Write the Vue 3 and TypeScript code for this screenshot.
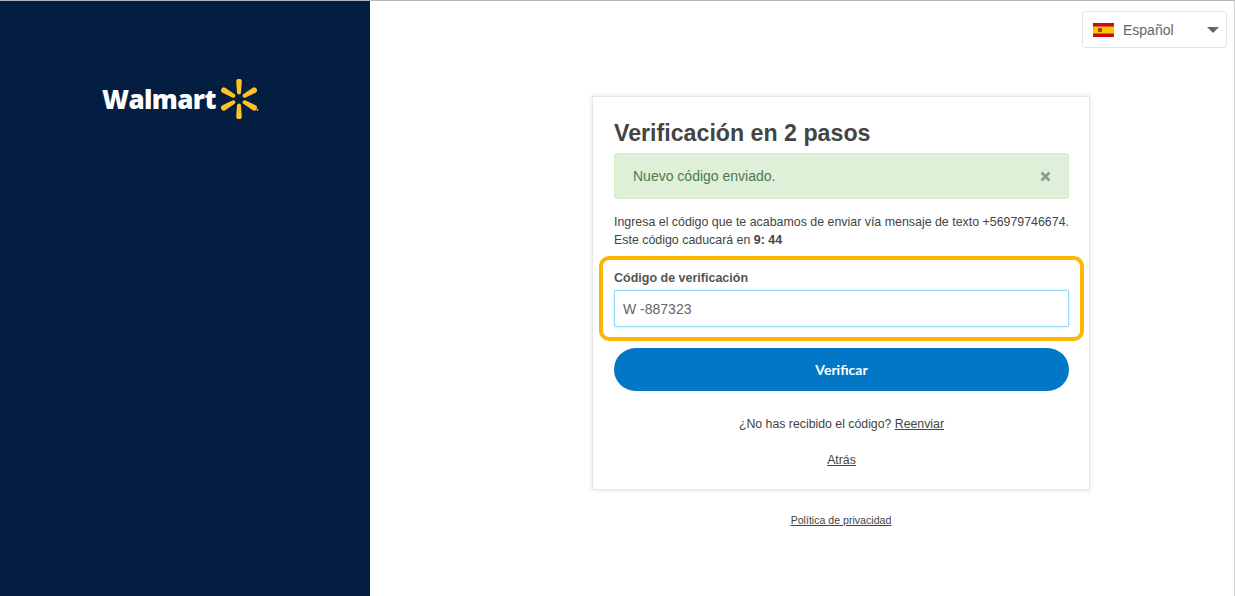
<template>
  <div class="page">
    <aside class="side">
      <div class="logo">
        <span class="logo-text">Walmart</span>
        <svg class="spark" width="39" height="40" viewBox="0 0 39 40" aria-hidden="true">
          <g fill="#ffc220">
            <path
              v-for="a in sparkAngles"
              :key="a"
              d="M16.2 3a2.8 2.8 0 0 1 5.6 0l-.8 11a2 2 0 0 1-4 0z"
              :transform="`rotate(${a} 19 20) translate(0 -0.5)`"
            />
          </g>
          <circle cx="37.5" cy="31" r="0.9" fill="#ffc220" />
        </svg>
      </div>
    </aside>

    <main class="main">
      <div class="lang-row">
        <div class="lang">
          <svg class="flag" width="21" height="14" viewBox="0 0 21 14" aria-hidden="true">
            <rect width="21" height="14" fill="#c60b1e" />
            <rect y="3.5" width="21" height="7" fill="#ffc400" />
            <rect x="5" y="5" width="4" height="4" rx="1" fill="#ad3c1c" />
          </svg>
          <span class="lang-name">Español</span>
          <span class="caret"></span>
        </div>
      </div>

      <section class="card">
        <h1 class="title">Verificación en 2 pasos</h1>
        <div class="alert">
          <span>Nuevo código enviado.</span>
          <svg width="11" height="11" viewBox="0 0 11 11" aria-hidden="true">
            <path d="M1.5 1.5l8 8M9.5 1.5l-8 8" stroke="#8f9a8d" stroke-width="2.6" fill="none" />
          </svg>
        </div>
        <p class="info">
          Ingresa el código que te acabamos de enviar vía mensaje de texto +56979746674.<br />
          Este código caducará en <b>9: 44</b>
        </p>
        <div class="field">
          <label class="label" for="code">Código de verificación</label>
          <input id="code" class="input" type="text" value="W -887323" />
          <div class="highlight"></div>
        </div>
        <button class="verify" type="button">Verificar</button>
        <p class="resend">¿No has recibido el código? <a href="#">Reenviar</a></p>
        <p class="back"><a href="#">Atrás</a></p>
      </section>

      <a class="privacy" href="#">Política de privacidad</a>
    </main>
  </div>
</template>

<script setup lang="ts">
const sparkAngles: number[] = [0, 60, 120, 180, 240, 300]
</script>

<style>
html, body {
  margin: 0;
  background: #fff;
}
</style>

<style scoped>
.page {
  display: flex;
  height: 596px;
  overflow: hidden;
  box-sizing: border-box;
  border-top: 1px solid #b5b5b5;
  border-right: 1px solid #d0d0d0;
  font-family: "Liberation Sans", Arial, sans-serif;
  color: #444;
}

.side {
  width: 370px;
  flex: none;
  background: #041e42;
  box-sizing: border-box;
  padding: 78px 0 0 102px;
}

.logo {
  display: flex;
  align-items: center;
  gap: 4px;
}

.logo-text {
  font-family: "Open Sans", sans-serif;
  font-weight: 800;
  font-size: 26px;
  letter-spacing: -0.6px;
  color: #fff;
  line-height: 40px;
}

.main {
  flex: 1;
  display: flex;
  flex-direction: column;
  align-items: center;
  min-width: 0;
  padding-left: 78px;
}

.lang-row {
  align-self: stretch;
  display: flex;
  justify-content: flex-end;
  padding: 10px 7px 0 0;
  height: 95px;
  box-sizing: border-box;
}

.lang {
  width: 145px;
  height: 37px;
  box-sizing: border-box;
  border: 1px solid #e4e4e4;
  border-radius: 3px;
  display: flex;
  align-items: center;
  padding: 0 7px 0 10px;
  font-size: 14px;
  color: #666;
}

.lang-name {
  margin-left: 9px;
  flex: 1;
}

.caret {
  width: 0;
  height: 0;
  border-left: 6px solid transparent;
  border-right: 6px solid transparent;
  border-top: 6px solid #666;
}

.card {
  width: 498px;
  height: 394px;
  box-sizing: border-box;
  padding: 22px 20px 0 21px;
  border: 1px solid #e6e6e6;
  box-shadow: 0 0 4px rgba(0, 0, 0, 0.14);
  background: #fff;
}

.title {
  margin: 0;
  font-size: 23.2px;
  line-height: 28px;
  font-weight: 700;
  color: #444;
}

.alert {
  margin-top: 6px;
  height: 46px;
  box-sizing: border-box;
  background: #dff0d8;
  border: 1px solid #d6e9c6;
  border-radius: 3px;
  display: flex;
  align-items: center;
  justify-content: space-between;
  padding: 0 17px 0 18px;
  font-size: 14px;
  color: #4c7a50;
}

.info {
  margin: 14px 0 0;
  font-size: 12.4px;
  line-height: 18px;
  color: #444;
  white-space: nowrap;
}

.field {
  position: relative;
  margin-top: 21px;
}

.label {
  display: block;
  font-size: 12.5px;
  font-weight: 700;
  line-height: 16px;
  color: #555;
}

.input {
  display: block;
  width: 100%;
  height: 37px;
  margin-top: 4px;
  box-sizing: border-box;
  border: 1px solid #8fd8fb;
  border-radius: 2px;
  padding: 0 8px;
  box-shadow: 0 0 2px #a8e0fc;
  outline: none;
  font-family: "Liberation Sans", Arial, sans-serif;
  font-size: 14px;
  color: #666;
}

.highlight {
  position: absolute;
  left: -15px;
  right: -15px;
  top: -14px;
  bottom: -14px;
  border: 4px solid #ffb600;
  border-radius: 10px;
  pointer-events: none;
}

.verify {
  display: block;
  width: 100%;
  height: 43px;
  margin-top: 21px;
  border: none;
  border-radius: 22px;
  background: #0277c5;
  color: #fff;
  font-family: Lato, sans-serif;
  font-weight: 700;
  font-size: 14px;
}

.resend,
.back {
  margin: 0;
  text-align: center;
  font-size: 12.3px;
  line-height: 16px;
  color: #444;
}

.resend {
  margin-top: 25px;
}

.back {
  margin-top: 20px;
}

a {
  color: #444;
  text-decoration: underline;
}

.privacy {
  margin-top: 23px;
  font-size: 10.6px;
  line-height: 14px;
}
</style>
